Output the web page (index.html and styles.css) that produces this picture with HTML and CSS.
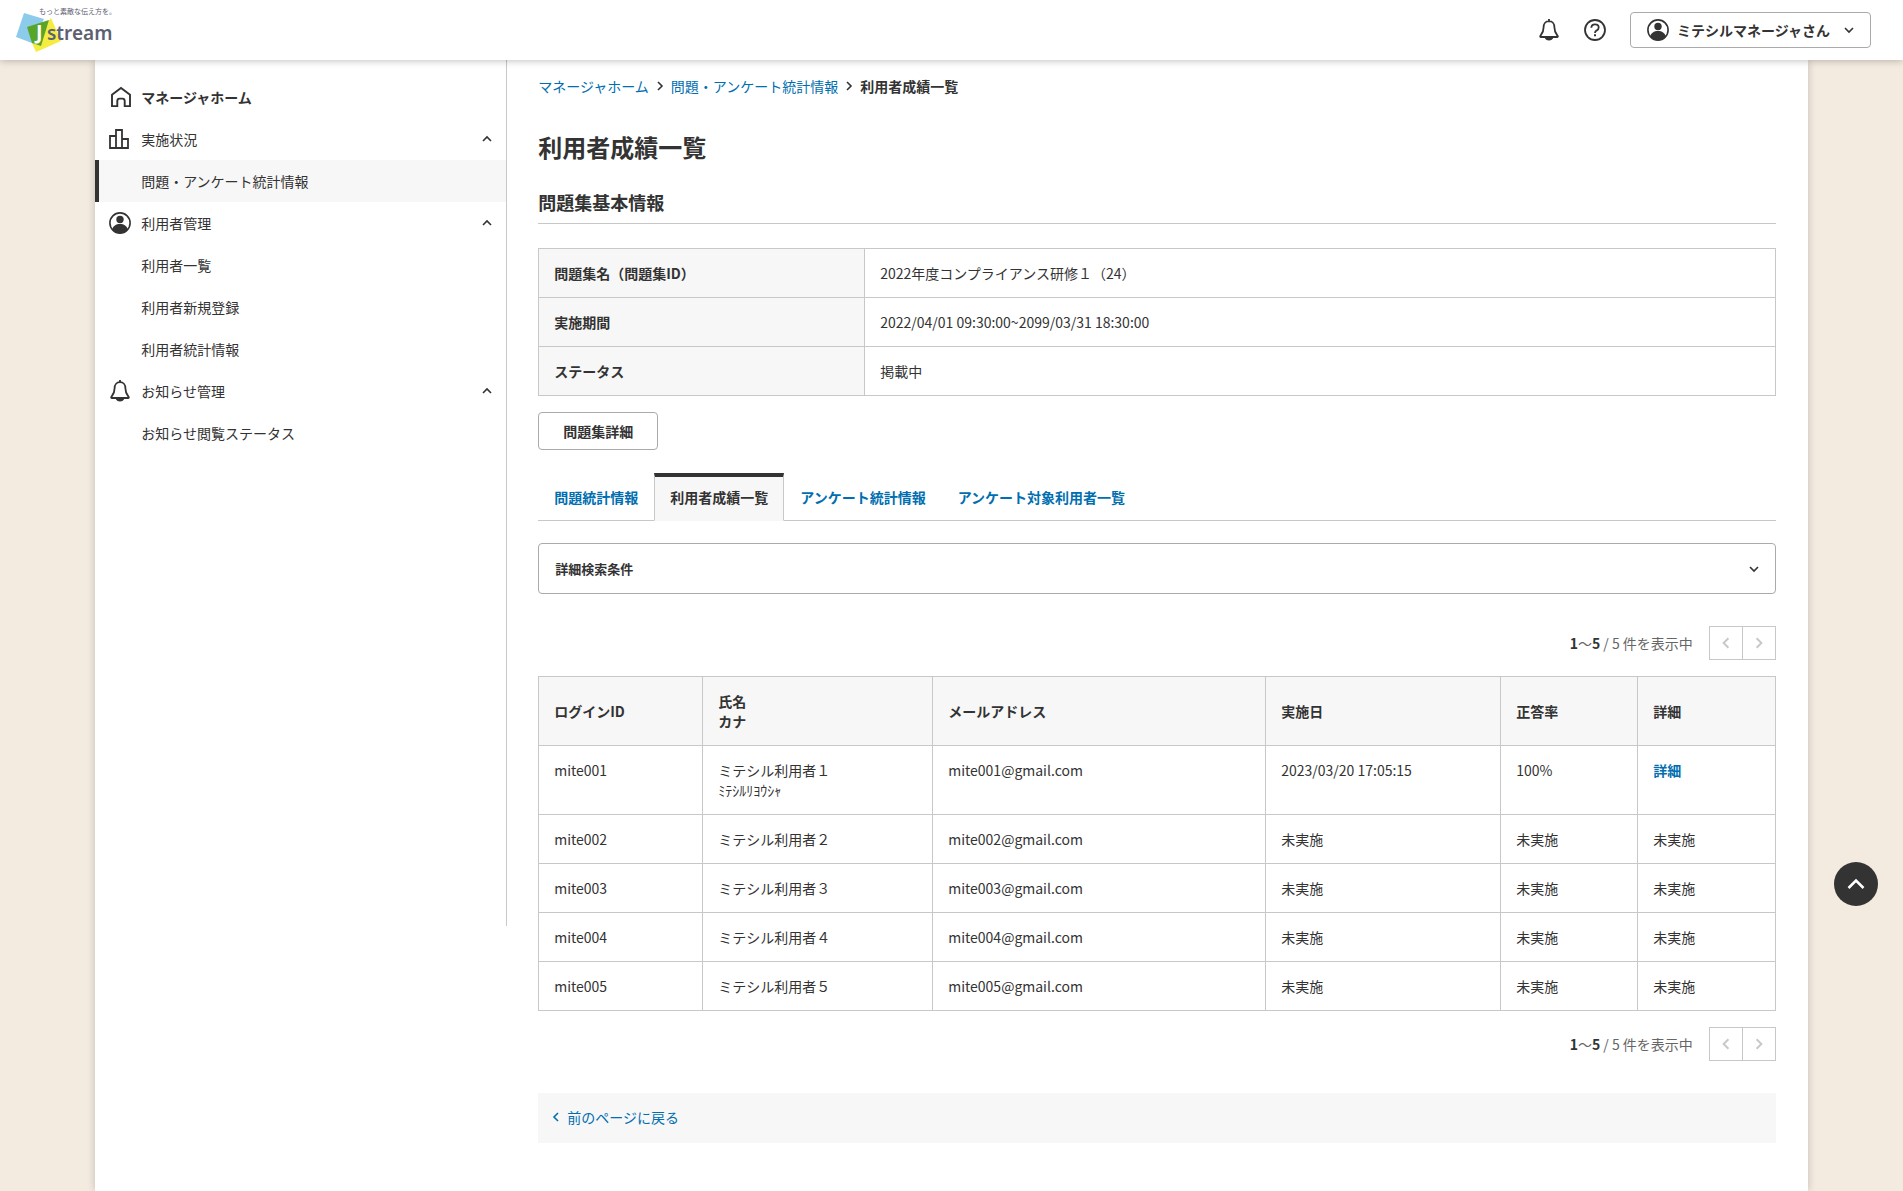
FILE: index.html
```html
<!DOCTYPE html>
<html lang="ja">
<head>
    <meta charset="UTF-8">
    <meta name="viewport" content="width=device-width, initial-scale=1.0">
    <title>利用者成績一覧</title>
    <link rel="stylesheet" href="styles.css">
</head>
<body>
    <!-- shared icons -->
    <svg class="sprite" aria-hidden="true">
        <symbol id="icon-bell" viewBox="0 0 22 24">
            <path d="M11 3.2C7.4 3.2 5.6 6 5.6 9.2c0 5-1.6 6.6-3.2 8.6-.5.7-.2 1.2.5 1.2h16.2c.7 0 1-.5.5-1.2-1.600-2-3.200-3.600-3.200-8.600 0-3.200-1.800-6-5.400-6z" fill="none" stroke="currentColor" stroke-width="1.800"/>
            <path d="M10.100 1h1.800v2.500h-1.800zM6.500 19.500h9c-.8 2-2.400 3-4.500 3s-3.700-1-4.500-3z" fill="currentColor"/>
        </symbol>
        <symbol id="icon-user" viewBox="0 0 22 22">
            <circle cx="11" cy="11" r="10.100" fill="none" stroke="currentColor" stroke-width="1.600"/>
            <circle cx="11" cy="7.500" r="3.700" fill="currentColor"/>
            <path d="M3.400 17.200C4 14 7 12 11 12s7 2 7.600 5.200C17 19.800 14.300 21.300 11 21.300s-6-1.500-7.600-4.100z" fill="currentColor"/>
        </symbol>
        <symbol id="icon-chevron" viewBox="0 0 10 10">
            <path d="M1 3l4 4 4-4" fill="none" stroke="currentColor" stroke-width="1.600"/>
        </symbol>
    </svg>

    <header class="header">
        <a class="logo" href="#">
            <svg width="104" height="48" viewBox="0 0 104 48" role="img" aria-label="Jstream">
                <path d="M8 7l20 6-12 24L0 31z" fill="#8ccbe9"/>
                <path d="M35 12l10 23-25 11-4-9z" fill="#f4ec41"/>
                <path d="M11 21l22-7-8 26-9-3z" fill="#58a528"/>
                <text class="logo-tag" x="23" y="8">もっと素敵な伝え方を。</text>
                <text class="logo-j" x="20" y="33">J</text>
                <text class="logo-name" x="31" y="34">stream</text>
            </svg>
        </a>
        <div class="header-menu">
            <button class="icon-btn" type="button" aria-label="お知らせ">
                <svg width="22" height="24"><use href="#icon-bell"/></svg>
            </button>
            <button class="icon-btn" type="button" aria-label="ヘルプ">
                <svg width="22" height="22" viewBox="0 0 22 22" fill="none" stroke="currentColor">
                    <circle cx="11" cy="11" r="10" stroke-width="1.800"/>
                    <path d="M7.300 8.800c.1-2.200 1.600-3.500 3.700-3.500 2.200 0 3.700 1.200 3.700 3.100 0 1.500-.8 2.200-2 3-1.200.7-1.700 1.200-1.700 2.500" stroke-width="1.800"/>
                    <path d="M11 15.300v2" stroke-width="2"/>
                </svg>
            </button>
            <button class="user-btn" type="button">
                <svg width="22" height="22"><use href="#icon-user"/></svg>
                <span>ミテシルマネージャさん</span>
                <svg class="user-arrow" width="10" height="10"><use href="#icon-chevron"/></svg>
            </button>
        </div>
    </header>

    <div class="container">
        <nav class="sidebar">
            <ul>
                <li><a class="nav-item home" href="#">
                    <svg class="nav-icon" width="22" height="22" viewBox="0 0 22 22" fill="none" stroke="currentColor" stroke-width="1.900">
                        <path d="M3 20.100V8.800L12 2l9 6.800v11.300h-5.300v-5c0-1.700-.8-2.500-2.200-2.500h-3c-1.400 0-2.200.8-2.200 2.500v5z"/>
                    </svg>マネージャホーム</a></li>
                <li><a class="nav-item" href="#">
                    <svg class="nav-icon" width="22" height="22" viewBox="0 0 22 22" fill="none" stroke="currentColor" stroke-width="1.800">
                        <path d="M1 8h6v12H1zM7 2h6v18H7zM13 11h6v9h-6z"/>
                    </svg>実施状況<svg class="nav-arrow up" width="10" height="10"><use href="#icon-chevron"/></svg></a></li>
                <li><a class="nav-item sub active" href="#">問題・アンケート統計情報</a></li>
                <li><a class="nav-item" href="#">
                    <svg class="nav-icon" width="22" height="22"><use href="#icon-user"/></svg>利用者管理<svg class="nav-arrow up" width="10" height="10"><use href="#icon-chevron"/></svg></a></li>
                <li><a class="nav-item sub" href="#">利用者一覧</a></li>
                <li><a class="nav-item sub" href="#">利用者新規登録</a></li>
                <li><a class="nav-item sub" href="#">利用者統計情報</a></li>
                <li><a class="nav-item" href="#">
                    <svg class="nav-icon" width="22" height="24"><use href="#icon-bell"/></svg>お知らせ管理<svg class="nav-arrow up" width="10" height="10"><use href="#icon-chevron"/></svg></a></li>
                <li><a class="nav-item sub" href="#">お知らせ閲覧ステータス</a></li>
            </ul>
        </nav>

        <main class="content">
            <div class="breadcrumb">
                <a href="#">マネージャホーム</a>
                <svg class="right" width="10" height="10"><use href="#icon-chevron"/></svg>
                <a href="#">問題・アンケート統計情報</a>
                <svg class="right" width="10" height="10"><use href="#icon-chevron"/></svg>
                <strong>利用者成績一覧</strong>
            </div>

            <h1>利用者成績一覧</h1>
            <h2>問題集基本情報</h2>

            <table class="info-table">
                <tr>
                    <th scope="row">問題集名（問題集ID）</th>
                    <td>2022年度コンプライアンス研修１（24）</td>
                </tr>
                <tr>
                    <th scope="row">実施期間</th>
                    <td>2022/04/01 09:30:00~2099/03/31 18:30:00</td>
                </tr>
                <tr>
                    <th scope="row">ステータス</th>
                    <td>掲載中</td>
                </tr>
            </table>
            <button class="detail-btn" type="button">問題集詳細</button>

            <div class="tabs">
                <a href="#">問題統計情報</a>
                <a class="selected" href="#">利用者成績一覧</a>
                <a href="#">アンケート統計情報</a>
                <a href="#">アンケート対象利用者一覧</a>
            </div>

            <button class="search-toggle" type="button">
                詳細検索条件
                <svg width="10" height="10"><use href="#icon-chevron"/></svg>
            </button>

            <div class="pager">
                <p><strong>1</strong>〜<strong>5</strong> / 5 件を表示中</p>
                <div class="pager-buttons">
                    <button type="button" aria-label="前へ" disabled><svg class="left" width="12" height="12"><use href="#icon-chevron"/></svg></button>
                    <button type="button" aria-label="次へ" disabled><svg class="right" width="12" height="12"><use href="#icon-chevron"/></svg></button>
                </div>
            </div>

            <table class="result-table">
                <thead>
                    <tr>
                        <th class="col-id">ログインID</th>
                        <th class="col-name">氏名<br>カナ</th>
                        <th class="col-mail">メールアドレス</th>
                        <th class="col-date">実施日</th>
                        <th class="col-rate">正答率</th>
                        <th>詳細</th>
                    </tr>
                </thead>
                <tbody>
                    <tr>
                        <td>mite001</td>
                        <td>ミテシル利用者１<br>ﾐﾃｼﾙﾘﾖｳｼｬ</td>
                        <td>mite001@gmail.com</td>
                        <td>2023/03/20 17:05:15</td>
                        <td>100%</td>
                        <td><a class="detail-link" href="#">詳細</a></td>
                    </tr>
                    <tr>
                        <td>mite002</td>
                        <td>ミテシル利用者２</td>
                        <td>mite002@gmail.com</td>
                        <td>未実施</td>
                        <td>未実施</td>
                        <td>未実施</td>
                    </tr>
                    <tr>
                        <td>mite003</td>
                        <td>ミテシル利用者３</td>
                        <td>mite003@gmail.com</td>
                        <td>未実施</td>
                        <td>未実施</td>
                        <td>未実施</td>
                    </tr>
                    <tr>
                        <td>mite004</td>
                        <td>ミテシル利用者４</td>
                        <td>mite004@gmail.com</td>
                        <td>未実施</td>
                        <td>未実施</td>
                        <td>未実施</td>
                    </tr>
                    <tr>
                        <td>mite005</td>
                        <td>ミテシル利用者５</td>
                        <td>mite005@gmail.com</td>
                        <td>未実施</td>
                        <td>未実施</td>
                        <td>未実施</td>
                    </tr>
                </tbody>
            </table>

            <div class="pager pager-bottom">
                <p><strong>1</strong>〜<strong>5</strong> / 5 件を表示中</p>
                <div class="pager-buttons">
                    <button type="button" aria-label="前へ" disabled><svg class="left" width="12" height="12"><use href="#icon-chevron"/></svg></button>
                    <button type="button" aria-label="次へ" disabled><svg class="right" width="12" height="12"><use href="#icon-chevron"/></svg></button>
                </div>
            </div>

            <div class="back">
                <a href="#"><svg class="left" width="10" height="10"><use href="#icon-chevron"/></svg>前のページに戻る</a>
            </div>
        </main>
    </div>

    <a class="page-top" href="#" aria-label="ページトップへ">
        <svg width="18" height="12" viewBox="0 0 18 12" fill="none" stroke="currentColor" stroke-width="2.500">
            <path d="M1.500 10L9 2.500l7.500 7.500"/>
        </svg>
    </a>
</body>
</html>
```

FILE: styles.css
```css
* {
    margin: 0;
    padding: 0;
    box-sizing: border-box;
}
body {
    font-family: "Noto Sans CJK JP", sans-serif;
    font-size: 14px;
    line-height: 20px;
    color: #333;
    background: #f3ebe0;
}
a {
    color: #006eb0;
    text-decoration: none;
}
button {
    font: inherit;
    color: inherit;
    background: #fff;
    cursor: pointer;
}
ul {
    list-style: none;
}
svg {
    display: block;
    flex-shrink: 0;
}
strong, th {
    font-weight: 700;
}
.sprite {
    position: absolute;
    width: 0;
    height: 0;
}
.up {
    transform: rotate(180deg);
}
.left {
    transform: rotate(90deg);
}
.right {
    transform: rotate(-90deg);
}

/* header */
.header {
    position: relative;
    z-index: 2;
    display: flex;
    justify-content: space-between;
    align-items: center;
    height: 60px;
    padding: 0 32px 0 16px;
    background: #fff;
    box-shadow: 0 0 8px rgba(0, 0, 0, 0.3);
}
.logo-tag {
    font-size: 7px;
    fill: #5b6072;
}
.logo-j {
    font-family: "Noto Sans", sans-serif;
    font-size: 20px;
    font-weight: 700;
    fill: #fff;
}
.logo-name {
    font-family: "Noto Sans", sans-serif;
    font-size: 19px;
    font-weight: 600;
    fill: #5b6072;
}
.header-menu {
    display: flex;
    align-items: center;
    gap: 24px;
}
.icon-btn {
    border: none;
}
.user-btn {
    display: flex;
    align-items: center;
    gap: 8px;
    height: 36px;
    padding: 0 16px;
    border: 1px solid #aaa;
    border-radius: 4px;
    font-weight: 700;
}
.user-arrow {
    margin-left: 6px;
}

/* layout */
.container {
    display: flex;
    align-items: flex-start;
    width: 90%;
    min-height: calc(100vh - 60px);
    margin: 0 auto;
    background: #fff;
    box-shadow: 0 0 8px rgba(0, 0, 0, 0.2);
}
.sidebar {
    box-sizing: content-box;
    width: 24%;
    min-height: calc(100vh - 341px);
    padding-top: 16px;
    border-right: 1px solid #c8c8c8;
}
.content {
    flex: 1;
    padding: 16px 32px 48px 31px;
}

/* sidebar */
.nav-item {
    display: flex;
    align-items: center;
    height: 42px;
    padding: 0 14px;
    color: #333;
}
.nav-icon {
    width: 22px;
    margin-right: 10px;
}
.nav-item.home {
    font-weight: 700;
}
.nav-item.sub {
    padding-left: 46px;
}
.nav-item.active {
    padding-left: 42px;
    border-left: 4px solid #333;
    background: #f7f7f7;
}
.nav-arrow {
    margin-left: auto;
}

/* content */
.breadcrumb {
    display: flex;
    align-items: center;
    gap: 6px;
}
h1 {
    margin: 35px 0 27px;
    font-size: 24px;
    line-height: 32px;
}
h2 {
    margin-bottom: 24px;
    padding-bottom: 9px;
    border-bottom: 1px solid #c8c8c8;
    font-size: 18px;
    line-height: 24px;
}
table {
    width: 100%;
    border-collapse: collapse;
    table-layout: fixed;
}
th, td {
    padding: 14px 15px;
    border: 1px solid #c8c8c8;
    text-align: left;
}
th {
    background: #f7f7f7;
}
td {
    vertical-align: top;
}
.info-table th {
    width: 326px;
}
.detail-btn {
    height: 38px;
    margin: 16px 0 23px;
    padding: 0 24px;
    border: 1px solid #aaa;
    border-radius: 4px;
    font-weight: 700;
}
.tabs {
    display: flex;
    border-bottom: 1px solid #c8c8c8;
}
.tabs a {
    margin-bottom: -1px;
    padding: 10px 15px 13px;
    border: 1px solid transparent;
    border-top-width: 4px;
    font-weight: 700;
}
.tabs .selected {
    border-color: #333 #c8c8c8 #f7f7f7;
    background: linear-gradient(#333 4px, #f7f7f7 4px) border-box;
    color: #333;
}
.search-toggle {
    display: flex;
    justify-content: space-between;
    align-items: center;
    width: 100%;
    height: 51px;
    margin: 22px 0 32px;
    padding: 0 16px;
    border: 1px solid #aaa;
    border-radius: 4px;
    font-size: 13px;
    font-weight: 700;
}
.pager {
    display: flex;
    justify-content: flex-end;
    align-items: center;
    gap: 16px;
    margin-bottom: 16px;
    color: #666;
}
.pager strong {
    color: #333;
}
.pager-buttons {
    display: flex;
}
.pager-buttons button {
    display: flex;
    justify-content: center;
    align-items: center;
    width: 34px;
    height: 34px;
    border: 1px solid #c8c8c8;
    color: #c8c8c8;
}
.pager-buttons button + button {
    margin-left: -1px;
}
.col-id {
    width: 164px;
}
.col-name {
    width: 230px;
}
.col-mail {
    width: 333px;
}
.col-date {
    width: 235px;
}
.col-rate {
    width: 137px;
}
.detail-link {
    font-weight: 700;
}
.pager-bottom {
    margin: 16px 0 32px;
}
.back {
    padding: 14px 13px 16px;
    background: #f7f7f7;
}
.back a {
    display: flex;
    align-items: center;
    gap: 6px;
}
.page-top {
    position: fixed;
    right: 25px;
    bottom: 285px;
    z-index: 3;
    display: flex;
    justify-content: center;
    align-items: center;
    width: 44px;
    height: 44px;
    border-radius: 50%;
    background: #333;
    color: #fff;
}
```
